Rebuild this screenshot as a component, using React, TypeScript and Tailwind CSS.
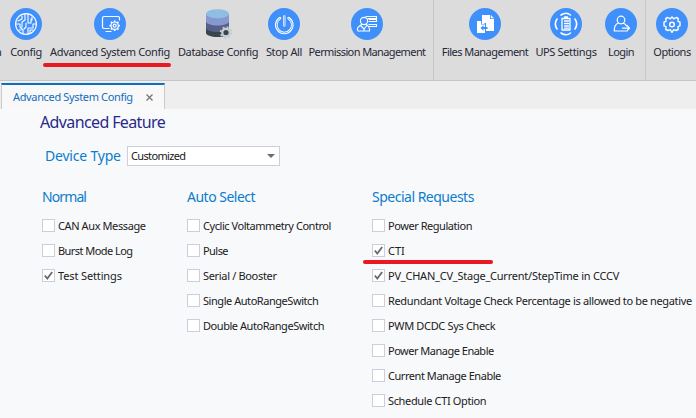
import type { ReactNode } from 'react';

const s = { fill: 'none', stroke: '#fff', strokeLinecap: 'round', strokeLinejoin: 'round' } as const;

function Disc({ children }: { children: ReactNode }) {
  return (
    <svg width="32" height="32" viewBox="0 0 32 32" className="block">
      <circle cx="16" cy="16" r="16" fill="#4090fc" />
      {children}
    </svg>
  );
}

const ConfigIcon = () => (
  <Disc>
    <g {...s} strokeWidth="1.1">
      <circle cx="16" cy="16" r="10.4" />
      <path d="M15 6v6l-3 2v5M18 6v9h3v-4M12 8v3l-4 2M22 9v3M6 16h4v3l3 3v3M16 15v4l-2 2M18 26v-6h5v-4h3M20 25v-3h3M9 22h2" />
    </g>
  </Disc>
);
const AdvancedIcon = () => (
  <Disc>
    <g {...s} strokeWidth="1.2">
      <path d="M15 20.5H10a1.5 1.5 0 0 1-1.5-1.5V10A1.5 1.5 0 0 1 10 8.5h14a1.5 1.5 0 0 1 1.5 1.5v2M12 23.5h5" />
      <circle cx="20.7" cy="17.7" r="3.7" />
      <circle cx="20.7" cy="17.7" r="1.5" />
      <path strokeWidth="1.8" d="M20.7 13.2v.1M20.7 22.1v.1M16.2 17.7h.1M25.1 17.7h.1M17.5 14.5h.1M23.8 14.5h.1M17.5 20.9h.1M23.8 20.9h.1" />
    </g>
  </Disc>
);
const DatabaseIcon = () => (
  <svg width="32" height="32" viewBox="0 0 32 32" className="block">
    <path d="M4 20v5c0 2.3 5 4 11.5 4S27 27.3 27 25v-5z" fill="#36454f" />
    <path d="M4 13v7c0 2.3 5 4 11.5 4S27 22.3 27 20v-7z" fill="#555f87" />
    <path d="M4 6v7.5c0 2.3 5 4 11.5 4S27 15.8 27 13.5V6z" fill="#8797cf" />
    <ellipse cx="15.5" cy="5.8" rx="11.5" ry="4.6" fill="#8fbde3" />
    <circle cx="24" cy="24.5" r="3.7" fill="#36454f" stroke="#c7ccce" strokeWidth="2.2" />
    <circle cx="24" cy="24.5" r="5.3" fill="none" stroke="#c7ccce" strokeWidth="1.8" strokeDasharray="2 2.16" />
  </svg>
);
const StopIcon = () => (
  <Disc>
    <g {...s}>
      <path strokeWidth="2.3" d="M16.3 8.5v9" />
      <path strokeWidth="2.6" d="M12 10.2a8 8 0 1 0 8.6 0" />
      <path stroke="#4090fc" strokeWidth=".7" d="M12 10.2a8 8 0 1 0 8.6 0M16.3 8.5v9" />
    </g>
  </Disc>
);
const PermissionIcon = () => (
  <Disc>
    <g {...s} strokeWidth="1.1">
      <circle cx="13" cy="13" r="3.6" />
      <path d="M10.5 16.5 8 18.5a3 3 0 0 0-1 4.5h11.5v-2c0-2-1-3-3-4.5M10 18l3 3 2.5-3M13 21v2M15 8.5h10.5v2H17M18 13.5h7.5v-2H18M18 16.5h7.5v2H18" />
    </g>
  </Disc>
);
const FilesIcon = () => (
  <Disc>
    <path d="M13 7h8v4h4v12h-8v-8h-4z" fill="#fff" />
    <path d="M21.8 7 25 10.2h-3.2z" fill="#fff" />
    <path d="M8 13h4v3.500h4V25H8z" fill="#fff" />
    <path d="m12.8 13 3.2 3h-3.2z" fill="#fff" />
    <path d="M16.5 15.5v8" stroke="#4090fc" />
    <path d="m11.5 20 3-2.8v1.8h4v2h-4v1.8z" fill="#4090fc" />
  </Disc>
);
const UpsIcon = () => (
  <Disc>
    <g {...s} strokeWidth="1.3">
      <path d="M12 10.5h8V22h-8zM14.5 9h3" />
      <path d="M14.5 13h4M14.5 15.5h4M14.5 18h4M14.5 20.2h4" />
      <path strokeWidth="1.6" d="M7 11c-2 3-2 7 0 10M25 11c2 3 2 7 0 10M11 7c3-2 7-2 9.5 0M11 25c3 2 7 2 9.5 0" />
    </g>
  </Disc>
);
const LoginIcon = () => (
  <Disc>
    <g {...s} strokeWidth="1.2">
      <circle cx="16" cy="12" r="3.8" />
      <path d="M13.5 15c-3 1.2-4.5 4-4.2 8H22M18.5 15.2c1.5.6 2.5 1.5 3 2.8M17.5 20.2h7l-2.5-2.7M24.5 20.2 22.5 22" />
    </g>
  </Disc>
);
const OptionsIcon = () => (
  <Disc>
    <g {...s} strokeWidth="1.4">
      <circle cx="16" cy="16.5" r="2.3" />
      <path d="M14.3 10.8 16 9l1.7 1.8 2.5-1.3 2 1-.2 2.8 2 .9v3.6l-2 .9.2 2.8-2.2 1-2.300-.8L16 24.500l-1.700-2.800-2.300.8-2.200-1 .2-2.800-2-.9v-3.600l2-.9-.2-2.800 2-1z" />
    </g>
  </Disc>
);

function Tool({ icon, label, width, tracking = 'tracking-[-0.35px]', marked }: { icon: ReactNode; label: string; width: string; tracking?: string; marked?: boolean }) {
  return (
    <div className={`relative flex shrink-0 flex-col items-center pt-2 ${width}`}>
      {icon}
      <span className={`mt-1 whitespace-nowrap text-[11px] leading-4 text-[#272737] ${tracking}`}>{label}</span>
      {marked && <span className="absolute -left-[3px] top-[63px] h-1 w-[128px] rounded-full bg-[#e81920]" />}
    </div>
  );
}

function Check({ label, checked, tracking = 'tracking-[-0.45px]', marked }: { label: string; checked?: boolean; tracking?: string; marked?: boolean }) {
  return (
    <label className="relative flex h-[25px] items-center gap-[3px]">
      <span className="flex size-[13px] shrink-0 items-center justify-center border border-[#cccddd] bg-white">
        {checked && (
          <svg width="11" height="11" viewBox="0 0 11 11">
            <path d="m1.800 5.500 2.500 3L9.200 2" fill="none" stroke="#696969" strokeWidth="1.800" />
          </svg>
        )}
      </span>
      <span className={`whitespace-nowrap text-[11px] leading-4 text-[#202020] ${tracking}`}>{label}</span>
      {marked && <span className="absolute -left-[9px] top-[22px] h-1 w-[130px] rounded-full bg-[#e81920]" />}
    </label>
  );
}

function Group({ title, width, tracking = 'tracking-[-0.5px]', children }: { title: string; width: string; tracking?: string; children: ReactNode }) {
  return (
    <section className={`shrink-0 ${width}`}>
      <h2 className={`mb-1.5 whitespace-nowrap text-[14px] leading-5 text-[#0d7ccb] ${tracking}`}>{title}</h2>
      {children}
    </section>
  );
}

export default function App() {
  return (
    <div className="flex h-[418px] w-[696px] flex-col overflow-hidden bg-[#f8f9fb] font-['Noto_Sans',sans-serif]">
      <header className="flex h-[81px] shrink-0 border-b border-[#c6c6c6] bg-[#dcdcdc]">
        <div className="flex w-1.5 shrink-0 justify-start pt-11 text-[11px] leading-4 text-[#272737]">
          <span className="-ml-[5px]">n</span>
        </div>
        <Tool icon={<ConfigIcon />} label="Config" width="w-10" />
        <Tool icon={<AdvancedIcon />} label="Advanced System Config" width="w-32" marked />
        <Tool icon={<DatabaseIcon />} label="Database Config" width="w-[88px]" />
        <Tool icon={<StopIcon />} label="Stop All" width="w-11" />
        <Tool icon={<PermissionIcon />} label="Permission Management" width="w-[122px]" tracking="tracking-[-0.6px]" />
        <div className="ml-[5px] mr-1 w-px shrink-0 bg-[#c6c6c6]" />
        <Tool icon={<FilesIcon />} label="Files Management" width="w-[94px]" tracking="tracking-[-0.53px]" />
        <Tool icon={<UpsIcon />} label="UPS Settings" width="w-[68px]" />
        <Tool icon={<LoginIcon />} label="Login" width="w-[42px]" tracking="tracking-[-0.55px]" />
        <div className="ml-[3px] mr-0.5 w-px shrink-0 bg-[#c6c6c6]" />
        <Tool icon={<OptionsIcon />} label="Options" width="w-12" tracking="tracking-[-0.5px]" />
      </header>
      <nav className="flex h-7 shrink-0 bg-[#eee] pl-px pt-0.5">
        <div className="flex w-[164px] items-center border-x border-t-2 border-x-[#cacaca] border-t-[#106ebe] bg-[#f8f8f9] pl-[11px]">
          <span className="whitespace-nowrap text-[11px] leading-4 tracking-[-0.35px] text-[#106ebe]">Advanced System Config</span>
          <svg width="7" height="7" viewBox="0 0 7 7" className="ml-auto mr-[11px]">
            <path d="m.5.5 6 6m0-6-6 6" stroke="#777" strokeWidth="1.300" />
          </svg>
        </div>
      </nav>
      <main className="pt-[3px]">
        <h1 className="ml-10 text-[16px] leading-5 tracking-[-0.62px] text-[#29298a]">Advanced Feature</h1>
        <div className="ml-[45px] mt-3.5 flex h-5 items-center">
          <span className="w-[82px] whitespace-nowrap text-[14px] leading-5 tracking-[-0.2px] text-[#0d7ccb]">Device Type</span>
          <div className="flex h-5 w-[153px] items-center justify-between border border-[#cccddd] bg-white pl-[3px] pr-1">
            <span className="text-[11px] leading-4 tracking-[-0.65px] text-[#202020]">Customized</span>
            <span className="border-x-[4px] border-t-4 border-x-transparent border-t-[#6c6c6c]" />
          </div>
        </div>
        <div className="ml-[42px] mt-[21px] flex">
          <Group title="Normal" width="w-[145px]" tracking="tracking-[-0.9px]">
            <Check label="CAN Aux Message" tracking="tracking-[-0.4px]" />
            <Check label="Burst Mode Log" tracking="tracking-[-0.55px]" />
            <Check label="Test Settings" tracking="tracking-[-0.13px]" checked />
          </Group>
          <Group title="Auto Select" width="w-[185px]">
            <Check label="Cyclic Voltammetry Control" />
            <Check label="Pulse" tracking="tracking-[-0.55px]" />
            <Check label="Serial / Booster" tracking="tracking-[-0.33px]" />
            <Check label="Single AutoRangeSwitch" />
            <Check label="Double AutoRangeSwitch" />
          </Group>
          <Group title="Special Requests" width="w-[324px]">
            <Check label="Power Regulation" />
            <Check label="CTI" tracking="tracking-[0px]" checked marked />
            <Check label="PV_CHAN_CV_Stage_Current/StepTime in CCCV" tracking="tracking-[-0.23px]" checked />
            <Check label="Redundant Voltage Check Percentage is allowed to be negative" tracking="tracking-[-0.35px]" />
            <Check label="PWM DCDC Sys Check" tracking="tracking-[-0.34px]" />
            <Check label="Power Manage Enable" tracking="tracking-[-0.5px]" />
            <Check label="Current Manage Enable" />
            <Check label="Schedule CTI Option" tracking="tracking-[-0.36px]" />
          </Group>
        </div>
      </main>
    </div>
  );
}
